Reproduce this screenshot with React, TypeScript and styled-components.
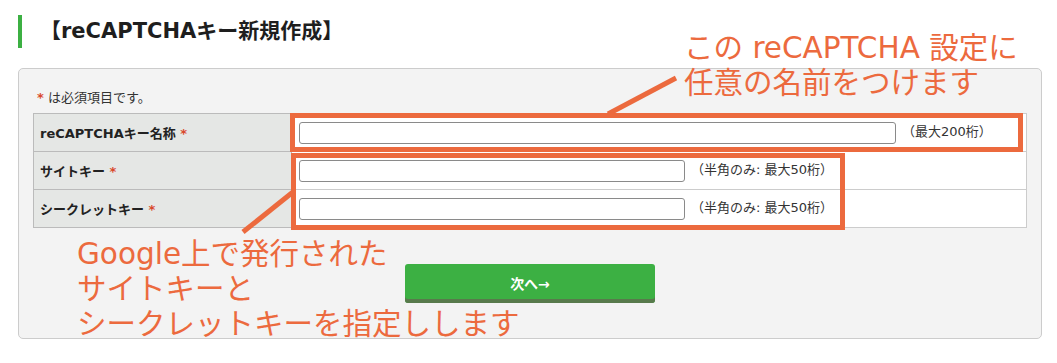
import styled, { createGlobalStyle } from "styled-components";

const GlobalStyle = createGlobalStyle`
  html, body {
    margin: 0;
    padding: 0;
    background: #ffffff;
  }
  body {
    font-family: "DejaVu Sans", "Noto Sans CJK JP", sans-serif;
    color: #222;
  }
`;

const ORANGE = "#ec6a3e";

const Page = styled.div`
  position: relative;
  width: 1057px;
  height: 363px;
  padding: 15px 15px 0 18px;
  box-sizing: border-box;
  overflow: hidden;
`;

const Heading = styled.h1`
  margin: 0;
  height: 33px;
  border-left: 4px solid #3cb043;
  padding-left: 18px;
  font-size: 21px;
  font-weight: 700;
  line-height: 33px;
  color: #1e1e1e;
`;

const Panel = styled.section`
  margin-top: 20px;
  background: #f3f3f3;
  border: 1px solid #cccccc;
  border-radius: 5px;
  padding: 19px 14px 35px 14px;
  height: 271px;
  box-sizing: border-box;
`;

const Note = styled.p`
  margin: 0 0 5px 4px;
  font-size: 13px;
  line-height: 20px;
  color: #333;
`;

const Req = styled.span`
  color: #d9482b;
  font-weight: 700;
`;

const Table = styled.table`
  width: 100%;
  border-collapse: collapse;
  border: 1px solid #bbbbbb;
  table-layout: fixed;
`;

const Row = styled.tr`
  height: 38px;
`;

const Label = styled.th`
  width: 245px;
  background: #e5e7e5;
  border: 1px solid #bbbbbb;
  padding: 0 6px;
  text-align: left;
  font-size: 13px;
  font-weight: 700;
  color: #222;
`;

const Value = styled.td`
  background: #ffffff;
  border: 1px solid #cccccc;
  padding: 0 7px;
  font-size: 13px;
  color: #333;
`;

const Input = styled.input<{ $w: number }>`
  width: ${(p) => p.$w}px;
  height: 22px;
  box-sizing: border-box;
  border: 1px solid #8a8a8a;
  border-radius: 3px;
  vertical-align: middle;
  margin: 0 6px 0 0;
`;

const Actions = styled.div`
  display: flex;
  justify-content: center;
  margin-top: 36px;
`;

const Button = styled.button`
  width: 250px;
  height: 39px;
  border: none;
  border-radius: 3px;
  background: #3cb043;
  box-shadow: inset 0 -4px 0 #587a4c;
  color: #fff;
  font-family: "DejaVu Sans", "Noto Sans CJK JP", sans-serif;
  font-size: 14px;
  font-weight: 700;
  padding-bottom: 3px;
`;

const Overlay = styled.div`
  position: absolute;
  inset: 0;
  pointer-events: none;
`;

const Frame = styled.div<{ $x: number; $y: number; $w: number; $h: number }>`
  position: absolute;
  left: ${(p) => p.$x}px;
  top: ${(p) => p.$y}px;
  width: ${(p) => p.$w}px;
  height: ${(p) => p.$h}px;
  border: 5px solid ${ORANGE};
  box-sizing: border-box;
`;

const Callout = styled.div<{ $x: number; $y: number }>`
  position: absolute;
  left: ${(p) => p.$x}px;
  top: ${(p) => p.$y}px;
  color: ${ORANGE};
  font-size: 29.5px;
  line-height: 35px;
  font-weight: 400;
  white-space: nowrap;
`;

const Lines = styled.svg`
  position: absolute;
  left: 0;
  top: 0;
`;

export default function App() {
  return (
    <>
      <GlobalStyle />
      <Page>
        <Heading>【reCAPTCHAキー新規作成】</Heading>
        <Panel>
          <Note>
            <Req>*</Req> は必須項目です。
          </Note>
          <Table>
            <tbody>
              <Row>
                <Label>
                  reCAPTCHAキー名称 <Req>*</Req>
                </Label>
                <Value>
                  <Input $w={597} type="text" />
                  （最大200桁）
                </Value>
              </Row>
              <Row>
                <Label>
                  サイトキー <Req>*</Req>
                </Label>
                <Value>
                  <Input $w={386} type="text" />
                  （半角のみ: 最大50桁）
                </Value>
              </Row>
              <Row>
                <Label>
                  シークレットキー <Req>*</Req>
                </Label>
                <Value>
                  <Input $w={386} type="text" />
                  （半角のみ: 最大50桁）
                </Value>
              </Row>
            </tbody>
          </Table>
          <Actions>
            <Button type="button">次へ→</Button>
          </Actions>
        </Panel>

        <Overlay>
          <Frame $x={290} $y={113} $w={733} $h={39} />
          <Frame $x={291} $y={153} $w={554} $h={77} />
          <Lines width="1057" height="363">
            <line x1="608" y1="114" x2="676" y2="78" stroke={ORANGE} strokeWidth="5" />
            <line x1="243" y1="232" x2="293" y2="192" stroke={ORANGE} strokeWidth="5" />
          </Lines>
          <Callout $x={684} $y={31}>
            この reCAPTCHA 設定に
            <br />
            任意の名前をつけます
          </Callout>
          <Callout $x={77} $y={237}>
            Google上で発行された
            <br />
            サイトキーと
            <br />
            シークレットキーを指定しします
          </Callout>
        </Overlay>
      </Page>
    </>
  );
}
